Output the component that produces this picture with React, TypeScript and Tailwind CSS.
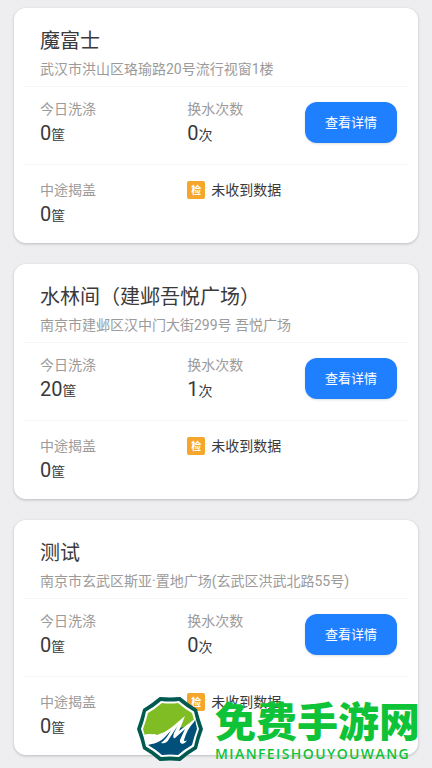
type Shop = {
  name: string;
  address: string;
  washed: number;
  waterChanges: number;
  lidOpened: number;
};

const shops: Shop[] = [
  { name: '魔富士', address: '武汉市洪山区珞瑜路20号流行视窗1楼', washed: 0, waterChanges: 0, lidOpened: 0 },
  { name: '水林间（建邺吾悦广场）', address: '南京市建邺区汉中门大街299号 吾悦广场', washed: 20, waterChanges: 1, lidOpened: 0 },
  { name: '测试', address: '南京市玄武区斯亚·置地广场(玄武区洪武北路55号)', washed: 0, waterChanges: 0, lidOpened: 0 },
];

function Stat({ label, value, unit }: { label: string; value: number; unit: string }) {
  return (
    <div>
      <div className="text-sm leading-5 text-[#9b9b9b]">{label}</div>
      <div className="text-xl leading-7 text-[#3a3a3c]">
        {value}
        <span className="text-sm">{unit}</span>
      </div>
    </div>
  );
}

function ShopCard({ shop }: { shop: Shop }) {
  return (
    <section className="rounded-xl bg-white px-2.5 shadow-[0_1px_3px_rgba(0,0,0,0.22)]">
      <header className="px-4 pt-[19px] pb-[7px]">
        <h2 className="text-xl leading-7 text-[#3a3a3c]">{shop.name}</h2>
        <p className="mt-1 text-sm leading-5 text-[#9b9b9b]">{shop.address}</p>
      </header>

      <div className="grid grid-cols-[5fr_4fr_92px] border-t border-[#f7f7f7] pr-[11px] pl-4 pt-3 pb-[17px]">
        <Stat label="今日洗涤" value={shop.washed} unit="筐" />
        <Stat label="换水次数" value={shop.waterChanges} unit="次" />
        <button className="mt-[3px] h-[41px] rounded-xl bg-[#1e80ff] text-[13px] text-white shadow-sm">查看详情</button>
      </div>

      <div className="grid grid-cols-[5fr_4fr_92px] border-t border-[#f7f7f7] pr-[11px] pl-4 py-[15px]">
        <Stat label="中途揭盖" value={shop.lidOpened} unit="筐" />
        <div className="col-span-2 flex h-5 items-center gap-1.5">
          <span className="flex size-[18px] items-center justify-center rounded-xs bg-[#f5a62c] text-[10px] font-bold text-white">
            检
          </span>
          <span className="text-sm leading-5 text-[#3a3a3c]">未收到数据</span>
        </div>
      </div>
    </section>
  );
}

function Logo() {
  return (
    <svg className="size-[66px] shrink-0" viewBox="0 0 66 66">
      {/* ten-sided badge: dark rim, thin white ring, green and blue halves */}
      <path
        d="M65 33 Q61.500 23.500 59 13.500 Q50.500 8.500 43 2 Q33 3 23 2 Q15.500 8.500 7 13.500 Q4.500 23.500 1 33 Q4.500 42.500 7 52.500 Q15.500 57.500 23 64 Q33 63 43 64 Q50.500 57.500 59 52.500 Q61.500 42.500 65 33 Z"
        fill="#005a50"
        stroke="#005a50"
        strokeWidth="2"
        strokeLinejoin="round"
      />
      <path
        d="M62 33 Q59 25 57 15.500 Q49 11 42 5 Q33 6 24 5 Q17 11 9 15.500 Q7 25 4 33 Q7 41 9 50.500 Q17 55 24 61 Q33 60 42 61 Q49 55 57 50.500 Q59 41 62 33 Z"
        fill="#fff"
      />
      <path
        d="M60 33 Q57 25 55 17 Q48 13 41 7 Q33 8 25 7 Q18 13 11 17 Q9 25 6 33 L8 40 L34 44 L58 23 Z"
        fill="#80bd24"
      />
      <path
        d="M58 24 L60 33 Q57 41 55 49 Q48 53 41 59 Q33 58 25 59 Q18 53 11 49 C21 47 28 41 35 33 L48 31 Z"
        fill="#00507a"
      />
      <path
        d="M7 39 C11 37 15 39 17 38 C19 38 20 40 22 38 C31 36 38 28 48 20 L42 35 L59 22 L57 26 C52 31 49 37 47 44 C47 46 49 45 50 44 C48 49 42 49 43 44 L48 33 L38 42 C36 43 36 40 37 37 L41 29 L32 43 C30 47 27 48 24 47 C28 44 31 40 34 34 C27 43 20 50 10 47 C14 46 18 44 19 42 C14 44 8 43 7 39 Z"
        fill="#fff"
      />
    </svg>
  );
}

function Watermark() {
  return (
    <div className="pointer-events-none absolute right-3 bottom-1.5 flex items-center gap-3">
      <Logo />
      <div>
        <div className="font-['Noto_Sans_CJK_SC',sans-serif] text-[41px] leading-[46px] font-black text-[#0fc338]">免费手游网</div>
        <div className="mt-1 font-['Open_Sans',sans-serif] text-[14px] leading-4 font-semibold tracking-widest text-[#0fc338]">
          MIANFEISHOUYOUWANG
        </div>
      </div>
    </div>
  );
}

export default function App() {
  return (
    <main className="relative min-h-screen bg-[#eeeef0] px-3.5 pt-2 pb-3 font-[Roboto,'Noto_Sans_CJK_SC',sans-serif]">
      <div className="flex flex-col gap-[21px]">
        {shops.map((shop) => (
          <ShopCard key={shop.name} shop={shop} />
        ))}
      </div>
      <Watermark />
    </main>
  );
}
